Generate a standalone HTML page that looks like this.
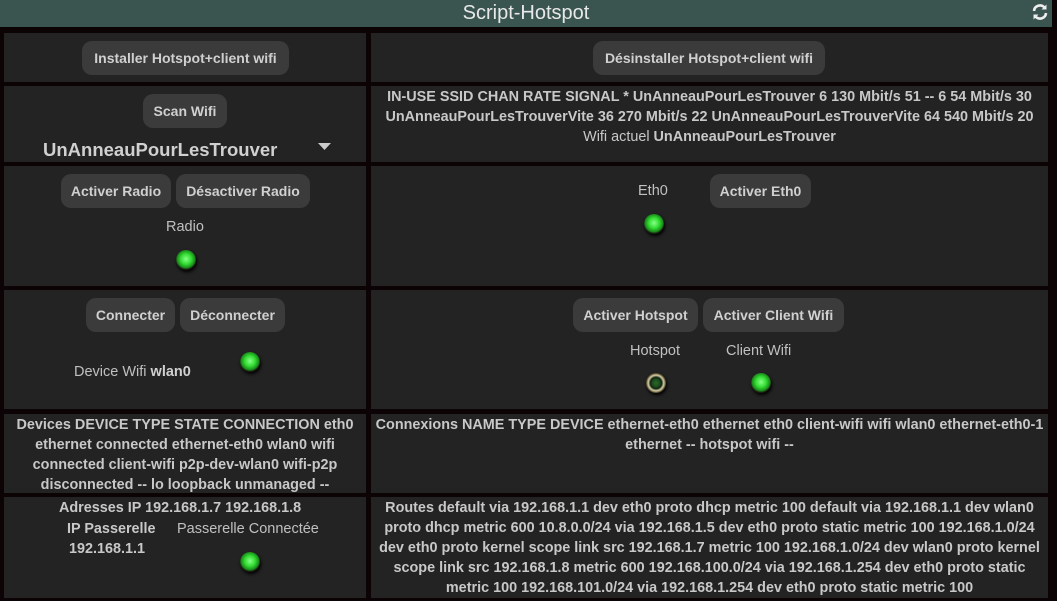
<!DOCTYPE html>
<html><head><meta charset="utf-8"><style>
*{box-sizing:border-box;margin:0;padding:0}
body{width:1057px;height:601px;background:#0c0404;font-family:"Liberation Sans",sans-serif;color:#c8c8c8;position:relative;overflow:hidden}
.hdr{position:absolute;left:0;top:0;width:1052px;height:27px;background:#3a5550;text-align:center;font-size:20px;line-height:26px;color:#e8e8e8}
.c{position:absolute;background:#232323;font-size:14.4px;font-weight:bold;text-align:center;white-space:nowrap}
.btn{position:absolute;background:#3b3b3b;border-radius:10px;height:34px;line-height:34px;text-align:center;color:#d0d0d0;font-weight:bold;font-size:14px}
.t{position:absolute;font-weight:normal;font-size:14.5px;color:#c0c0c0;white-space:nowrap}
.led{position:absolute;width:20px;height:20px;border-radius:50%;background:radial-gradient(circle at 50% 45%,#8f8 0,#3d3 35%,#1a8a1a 60%,#1a1a10 70%,#000 100%);box-shadow:1px 2px 3px #000}
.led.off{background:radial-gradient(circle at 50% 50%,#2a6a2a 0,#1d4a1d 28%,#0c200c 40%,#d8cfa8 55%,#5a5030 68%,#111 80%)}
.m{position:absolute;left:0;width:100%;line-height:20.5px}
</style></head><body>
<div class="hdr">Script-Hotspot</div>
<svg style="position:absolute;left:1031px;top:3px" width="18" height="18" viewBox="0 0 18 18"><path d="M3 8a6 6 0 0 1 10.5-3.5M15 10a6 6 0 0 1-10.5 3.5" stroke="#eee" stroke-width="2.6" fill="none"/><path d="M15.5 1.5v5h-5zM2.5 16.5v-5h5z" fill="#eee"/></svg>

<div class="c" style="left:4px;top:33px;width:362px;height:49px"></div>
<div class="btn" style="left:82px;top:41px;width:207px">Installer Hotspot+client wifi</div>
<div class="c" style="left:371px;top:33px;width:677px;height:49px"></div>
<div class="btn" style="left:593px;top:41px;width:232px">Désinstaller Hotspot+client wifi</div>

<div class="c" style="left:4px;top:86px;width:362px;height:76px"></div>
<div class="btn" style="left:143px;top:94px;width:84px">Scan Wifi</div>
<div class="t" style="left:43px;top:139px;font-size:18.5px;font-weight:bold;color:#d0d0d0">UnAnneauPourLesTrouver</div>
<svg style="position:absolute;left:318px;top:143px" width="13" height="8"><path d="M0 0h13L6.5 7z" fill="#ccc"/></svg>
<div class="c" style="left:371px;top:86px;width:677px;height:76px">
<div class="m" style="top:1px">IN-USE SSID CHAN RATE SIGNAL * UnAnneauPourLesTrouver 6 130 Mbit/s 51 -- 6 54 Mbit/s 30</div>
<div class="m" style="top:21px">UnAnneauPourLesTrouverVite 36 270 Mbit/s 22 UnAnneauPourLesTrouverVite 64 540 Mbit/s 20</div>
<div class="m" style="top:41px"><span style="font-weight:normal">Wifi actuel</span> UnAnneauPourLesTrouver</div></div>

<div class="c" style="left:4px;top:166px;width:362px;height:120px"></div>
<div class="btn" style="left:61px;top:174px;width:110px">Activer Radio</div>
<div class="btn" style="left:176px;top:174px;width:134px">Désactiver Radio</div>
<div class="t" style="left:166px;top:219px">Radio</div>
<div class="led" style="left:176px;top:250px"></div>
<div class="c" style="left:371px;top:166px;width:677px;height:120px"></div>
<div class="t" style="left:638px;top:183px">Eth0</div>
<div class="btn" style="left:710px;top:174px;width:101px">Activer Eth0</div>
<div class="led" style="left:644px;top:214px"></div>

<div class="c" style="left:4px;top:290px;width:362px;height:119px"></div>
<div class="btn" style="left:86px;top:298px;width:89px">Connecter</div>
<div class="btn" style="left:180px;top:298px;width:105px">Déconnecter</div>
<div class="t" style="left:74px;top:364px">Device Wifi <b style="color:#d0d0d0">wlan0</b></div>
<div class="led" style="left:240px;top:352px"></div>
<div class="c" style="left:371px;top:290px;width:677px;height:119px"></div>
<div class="btn" style="left:573px;top:298px;width:125px">Activer Hotspot</div>
<div class="btn" style="left:703px;top:298px;width:141px">Activer Client Wifi</div>
<div class="t" style="left:630px;top:343px">Hotspot</div>
<div class="t" style="left:726px;top:343px">Client Wifi</div>
<div class="led off" style="left:646px;top:373px"></div>
<div class="led" style="left:751px;top:373px"></div>

<div class="c" style="left:4px;top:414px;width:362px;height:79px">
<div class="m" style="top:1px">Devices DEVICE TYPE STATE CONNECTION eth0</div>
<div class="m" style="top:21px">ethernet connected ethernet-eth0 wlan0 wifi</div>
<div class="m" style="top:41px">connected client-wifi p2p-dev-wlan0 wifi-p2p</div>
<div class="m" style="top:61px">disconnected -- lo loopback unmanaged --</div></div>
<div class="c" style="left:371px;top:414px;width:677px;height:79px">
<div class="m" style="top:1px">Connexions NAME TYPE DEVICE ethernet-eth0 ethernet eth0 client-wifi wifi wlan0 ethernet-eth0-1</div>
<div class="m" style="top:21px">ethernet -- hotspot wifi --</div></div>

<div class="c" style="left:4px;top:497px;width:362px;height:101px"></div>
<div class="t" style="left:59px;top:500px;font-weight:bold;color:#c8c8c8;font-size:14.4px">Adresses IP 192.168.1.7 192.168.1.8</div>
<div class="t" style="left:67px;top:521px;font-weight:bold;color:#c8c8c8;font-size:14.4px">IP Passerelle</div>
<div class="t" style="left:69px;top:541px;font-weight:bold;color:#c8c8c8;font-size:14.4px">192.168.1.1</div>
<div class="t" style="left:177px;top:521px">Passerelle Connectée</div>
<div class="led" style="left:240px;top:552px"></div>
<div class="c" style="left:371px;top:497px;width:677px;height:101px">
<div class="m" style="top:1px">Routes default via 192.168.1.1 dev eth0 proto dhcp metric 100 default via 192.168.1.1 dev wlan0</div>
<div class="m" style="top:21px">proto dhcp metric 600 10.8.0.0/24 via 192.168.1.5 dev eth0 proto static metric 100 192.168.1.0/24</div>
<div class="m" style="top:41px">dev eth0 proto kernel scope link src 192.168.1.7 metric 100 192.168.1.0/24 dev wlan0 proto kernel</div>
<div class="m" style="top:61px">scope link src 192.168.1.8 metric 600 192.168.100.0/24 via 192.168.1.254 dev eth0 proto static</div>
<div class="m" style="top:81px">metric 100 192.168.101.0/24 via 192.168.1.254 dev eth0 proto static metric 100</div></div>
</body></html>
